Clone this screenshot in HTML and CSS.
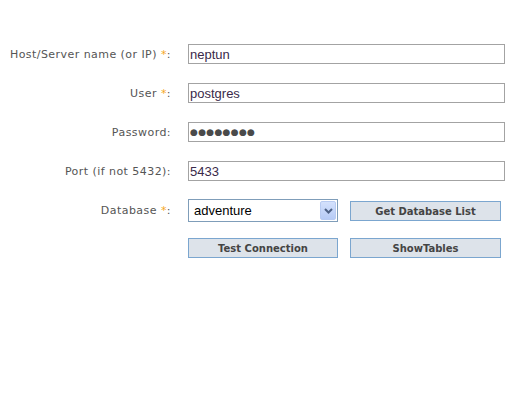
FILE: index.html
```
<!DOCTYPE html>
<html>
<head>
<meta charset="utf-8">
<link rel="stylesheet" href="styles.css">
</head>
<body>
<form class="form">
  <div class="row">
    <label class="label">Host/Server name (or IP) <span class="req">*</span>:</label>
    <input class="field" type="text" value="neptun">
  </div>
  <div class="row">
    <label class="label">User <span class="req">*</span>:</label>
    <input class="field" type="text" value="postgres">
  </div>
  <div class="row">
    <label class="label">Password:</label>
    <input class="field pass" type="text" value="●●●●●●●●">
  </div>
  <div class="row row-port">
    <label class="label">Port (if not 5432):</label>
    <input class="field" type="text" value="5433">
  </div>
  <div class="row row-db">
    <label class="label">Database <span class="req">*</span>:</label>
    <div class="select">
      <span class="select-text">adventure</span>
      <span class="select-arrow"><svg width="9" height="6" viewBox="0 0 9 6"><path d="M1 1 L4.5 4.5 L8 1" fill="none" stroke="#4d6185" stroke-width="2"/></svg></span>
    </div>
    <button class="btn btn-right btn-db" type="button">Get Database List</button>
  </div>
  <div class="row row-btns">
    <span class="label"></span>
    <button class="btn" type="button">Test Connection</button>
    <button class="btn btn-right" type="button">ShowTables</button>
  </div>
</form>
</body>
</html>
```
FILE: styles.css
```
html, body {
  margin: 0;
  padding: 0;
  background: #fff;
}
.form {
  display: flex;
  flex-direction: column;
  padding: 44px 0 0 0;
  font-family: "DejaVu Sans", Verdana, sans-serif;
}
.row {
  display: flex;
  align-items: center;
  height: 20px;
  margin-bottom: 19px;
}
.row-port {
  margin-bottom: 18px;
}
.label {
  width: 171px;
  flex: none;
  text-align: right;
  font-size: 11px;
  letter-spacing: 0.45px;
  color: #555;
  margin-right: 17px;
  white-space: nowrap;
}
.req {
  color: #f5a623;
}
.field {
  box-sizing: border-box;
  width: 317px;
  height: 20px;
  margin: 0;
  padding: 0 1px;
  border: 1px solid #a3a3a3;
  font-family: "Liberation Sans", Arial, sans-serif;
  font-size: 13px;
  color: #3a2a4a;
  outline: none;
}
.pass {
  font-family: "DejaVu Sans", sans-serif;
  font-size: 9px;
  letter-spacing: 0.3px;
  color: #4a4a4a;
}
.row-db {
  height: 23px;
  margin-bottom: 16px;
}
.select {
  box-sizing: border-box;
  width: 150px;
  height: 23px;
  border: 1px solid #7f9db9;
  display: flex;
  align-items: center;
  justify-content: space-between;
  padding: 1px;
  font-family: "Liberation Sans", Arial, sans-serif;
  font-size: 13px;
  color: #000;
}
.select-text {
  padding-left: 4px;
}
.select-arrow {
  box-sizing: border-box;
  width: 16px;
  height: 19px;
  background: linear-gradient(#d4e1fc, #b6cbf6);
  border: 1px solid #b8cbf2;
  border-radius: 2px;
  display: flex;
  align-items: center;
  justify-content: center;
}
.btn {
  box-sizing: border-box;
  width: 150px;
  height: 20px;
  margin: 0;
  padding: 0;
  border: 1px solid #7ba6cf;
  background: #dde3ea;
  font-family: "DejaVu Sans", Verdana, sans-serif;
  font-weight: bold;
  font-size: 10px;
  color: #444;
}
.btn-right {
  width: 151px;
  margin-left: 12px;
}
.btn-db {
  align-self: flex-end;
  margin-bottom: 1px;
}
```
